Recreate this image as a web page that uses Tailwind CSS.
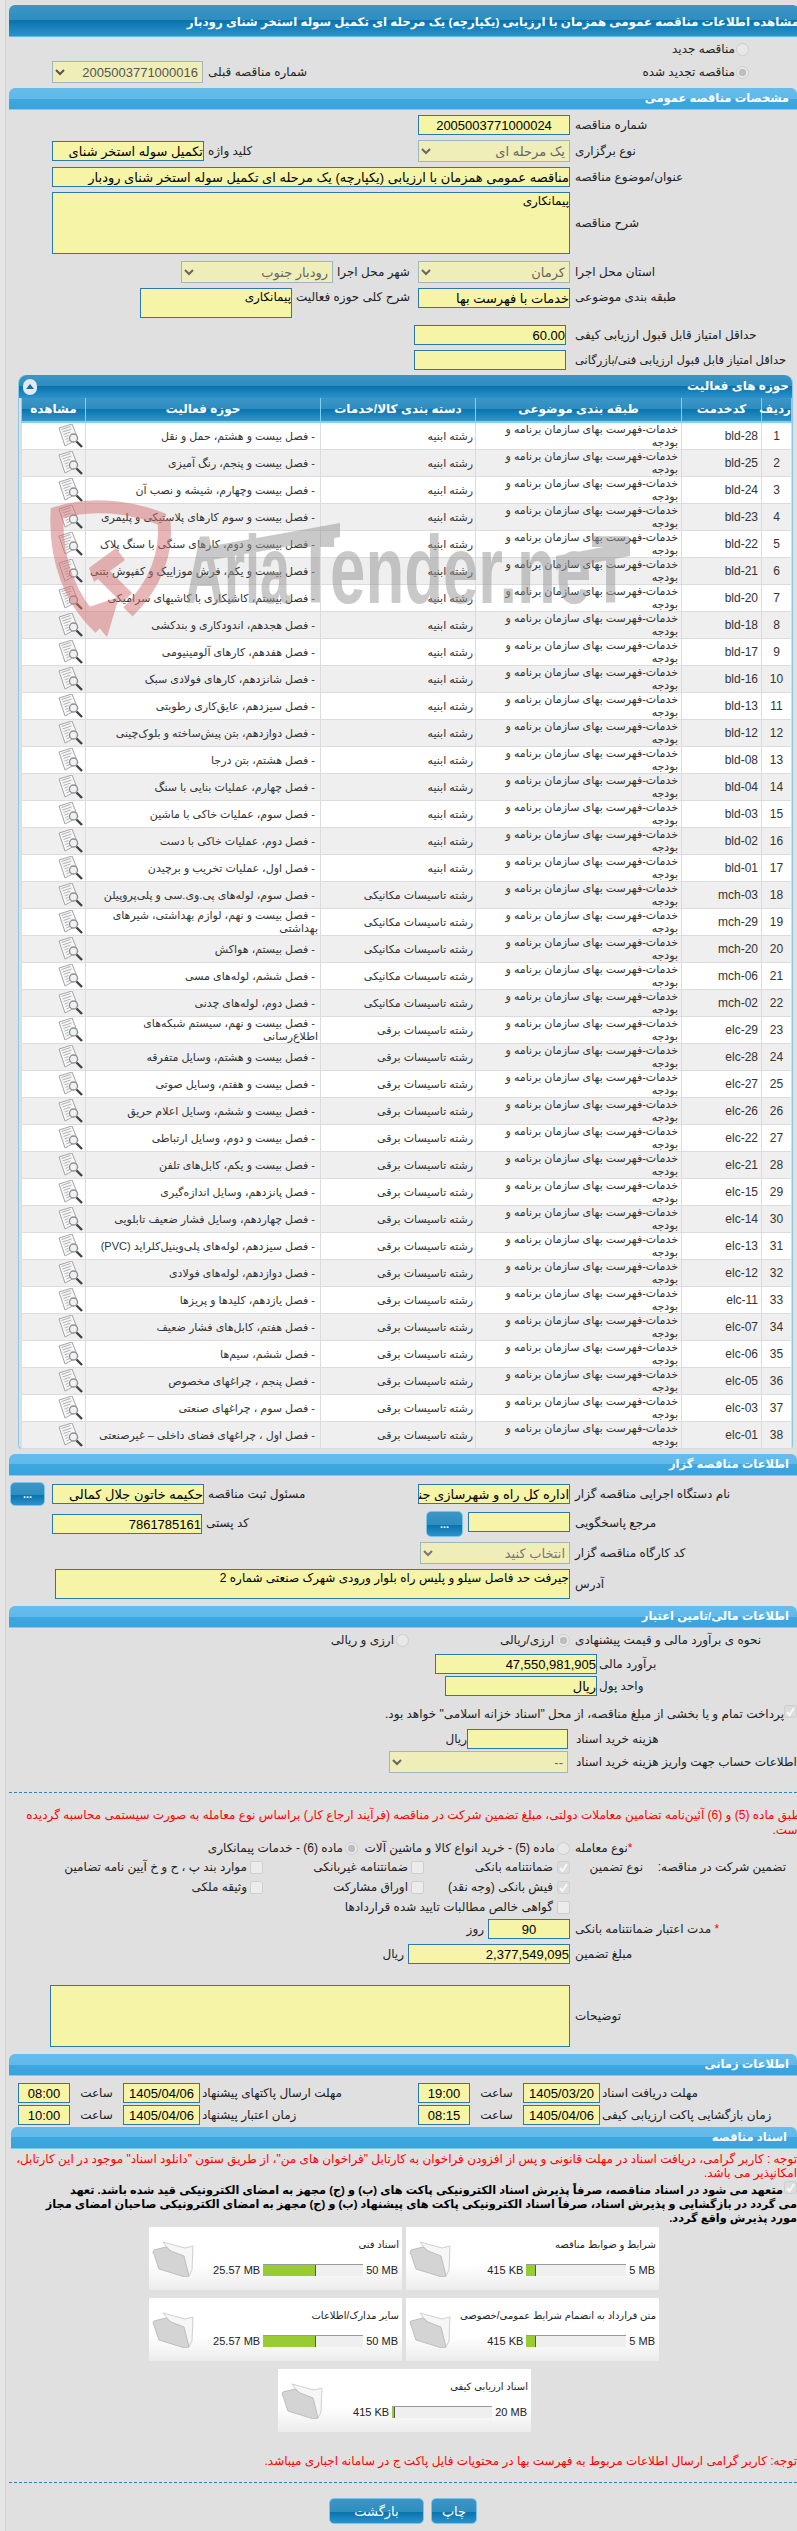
<!DOCTYPE html>
<html lang="fa" dir="rtl">
<head>
<meta charset="UTF-8">
<title>مشاهده اطلاعات مناقصه</title>
<script src="https://cdn.jsdelivr.net/npm/@tailwindcss/browser@4"></script>
</head>
<body class="relative w-[797px] h-[2531px] overflow-hidden bg-[#e0e0e0] text-[12px] leading-[15px] text-[#222] font-[Liberation_Sans,DejaVu_Sans,sans-serif]">

<!-- icons -->
<svg class="hidden">
	<symbol id="doc" viewBox="0 0 25 24">
		<path d="M1 4 14 0l6 15-13 7z" fill="#f7f7f7" stroke="#a4a4a4"/>
		<path d="M3.5 5.5l9-3M4.5 8l9-3M5.5 10.5l7-2.5M6.500 13l4-1.500M7.500 15.500l3-1.200M8.500 18l4-2" stroke="#b0b0b0" fill="none"/>
		<circle cx="15.500" cy="14" r="4" fill="#edf2f4" stroke="#8f8f8f" stroke-width="1.300"/>
		<path d="M18.500 17.500l5.500 5.500" stroke="#444" stroke-width="2.400"/>
	</symbol>
	<symbol id="folder" viewBox="0 0 42 38">
		<path d="M11 3l22 6 8-2-1 24-3 6z" fill="#f6f6f6" stroke="#d0d0d0"/>
		<path d="M2 11l12-3 5 4 13 5 5 20-4 1-26-8C5 25 3 17 1 13z" fill="#d4d4d4" stroke="#bdbdbd"/>
	</symbol>
	<symbol id="tick" viewBox="0 0 13 13">
		<rect x="0.5" y="0.5" width="12" height="12" rx="2" fill="#dcdcdc" stroke="#cfcfcf"/>
		<path d="M3 7l2.5 3L10 3" fill="none" stroke="#f8f8f8" stroke-width="2"/>
	</symbol>
</svg>

<!-- left strip -->
<div class="absolute left-0 top-0 w-[6px] h-full bg-[#e6e6e6] border-r border-[#cfcfcf]"></div>

<div class="mt-[5px] ml-[9px] h-[32px] rounded-t-[6px] border-b border-[#5cbcec] bg-[linear-gradient(to_bottom,#3a96c6_0%,#2e8dbf_50%,#0a73ac_50%,#2c92cc_100%)] pt-[7px] -mr-[2px] text-[11.8px] leading-[20px] font-bold text-white whitespace-nowrap">مشاهده اطلاعات مناقصه عمومی همزمان با ارزیابی (یکپارچه) یک مرحله ای تکمیل سوله استخر شنای رودبار</div>

<div class="mt-[5px] h-[14px] flex items-center gap-[1px] pr-[48px]">
	<input type="radio" disabled class="appearance-none w-[13px] h-[13px] rounded-full bg-[#e8e8e8] border border-[#cdcdcd]">
	<span>مناقصه جدید</span>
</div>
<div class="mt-[5px] h-[22px] flex items-center pr-[48px] pl-[52px]">
	<input type="radio" checked disabled class="appearance-none w-[13px] h-[13px] rounded-full border border-[#cdcdcd] bg-[radial-gradient(circle,#bdbdbd_0%,#bdbdbd_45%,#e8e8e8_50%)]">
	<span class="mr-[1px]">مناقصه تجدید شده</span>
	<span class="mr-auto ml-[5px]">شماره مناقصه قبلی</span>
	<select disabled class="w-[151px] h-[22px] border border-[#9fb6bd] bg-[#f0eeb8] text-[13px] text-[#555] opacity-100"><option>2005003771000016</option></select>
</div>

<div class="mt-[5px] ml-[9px] h-[22px] rounded-t-[6px] border-b border-[#7ccdf0] bg-[linear-gradient(to_bottom,#66bdec_0%,#60b9ea_50%,#3ea7e0_50%,#3ba3dc_100%)] pr-[8px] pt-[3px] text-[11.5px] font-bold text-white">مشخصات مناقصه عمومی</div>

<div class="mt-[5px] h-[20px] flex items-center">
	<label class="w-[222px] shrink-0 text-left">شماره مناقصه</label>
	<input readonly value="2005003771000024" class="mr-[5px] w-[152px] h-[20px] border border-[#2a79a8] bg-[#f6f4a6] text-center text-[13px] text-black outline-none">
</div>
<div class="mt-[5px] h-[22px] flex items-center pl-[52px]">
	<label class="w-[222px] shrink-0 text-left">نوع برگزاری</label>
	<select disabled class="mr-[5px] w-[152px] h-[22px] border border-[#9fb6bd] bg-[#f0eeb8] text-[13px] text-[#666] opacity-100"><option>یک مرحله ای</option></select>
	<label class="mr-auto ml-[4px]">کلید واژه</label>
	<input readonly value="تکمیل سوله استخر شنای" class="w-[152px] h-[20px] border border-[#2a79a8] bg-[#f6f4a6] text-[13px] text-black outline-none">
</div>
<div class="mt-[5px] h-[20px] flex items-center">
	<label class="w-[222px] shrink-0 text-left">عنوان/موضوع مناقصه</label>
	<input readonly value="مناقصه عمومی همزمان با ارزیابی (یکپارچه) یک مرحله ای تکمیل سوله استخر شنای رودبار" class="mr-[5px] w-[518px] h-[20px] border border-[#2a79a8] bg-[#f6f4a6] text-[13px] text-black outline-none">
</div>
<div class="mt-[5px] h-[62px] flex items-center">
	<label class="w-[222px] shrink-0 text-left">شرح مناقصه</label>
	<textarea readonly class="mr-[5px] w-[518px] h-[62px] resize-none border border-[#2a79a8] bg-[#f6f4a6] text-[12px] leading-[16px] text-black outline-none">پیمانکاری</textarea>
</div>
<div class="mt-[7px] h-[22px] flex items-center pl-[181px]">
	<label class="w-[222px] shrink-0 text-left">استان محل اجرا</label>
	<select disabled class="mr-[5px] w-[152px] h-[22px] border border-[#9fb6bd] bg-[#f0eeb8] text-[13px] text-[#666] opacity-100"><option>کرمان</option></select>
	<label class="mr-auto ml-[4px]">شهر محل اجرا</label>
	<select disabled class="w-[152px] h-[22px] border border-[#9fb6bd] bg-[#f0eeb8] text-[13px] text-[#666] opacity-100"><option>رودبار جنوب</option></select>
</div>
<div class="mt-[5px] h-[30px] flex items-start pl-[140px]">
	<label class="w-[222px] shrink-0 text-left pt-[2px]">طبقه بندی موضوعی</label>
	<input readonly value="خدمات با فهرست بها" class="mr-[5px] w-[152px] h-[20px] border border-[#2a79a8] bg-[#f6f4a6] text-[13px] text-black outline-none">
	<label class="mr-auto ml-[4px] pt-[2px]">شرح کلی حوزه فعالیت</label>
	<textarea readonly class="w-[152px] h-[30px] resize-none border border-[#2a79a8] bg-[#f6f4a6] text-[12px] leading-[16px] text-black outline-none">پیمانکاری</textarea>
</div>
<div class="mt-[7px] h-[20px] flex items-center">
	<label class="w-[222px] shrink-0 text-left">حداقل امتیاز قابل قبول ارزیابی کیفی</label>
	<input readonly value="60.00" class="mr-[9px] w-[152px] h-[20px] border border-[#2a79a8] bg-[#f6f4a6] text-[13px] text-black outline-none">
</div>
<div class="mt-[5px] h-[20px] flex items-center">
	<label class="w-[222px] shrink-0 text-left whitespace-nowrap text-[11.5px]">حداقل امتیاز قابل قبول ارزیابی فنی/بازرگانی</label>
	<input readonly class="mr-[9px] w-[152px] h-[20px] border border-[#2a79a8] bg-[#f6f4a6] outline-none">
</div>

<!-- activity table -->
<div class="relative mt-[5px] ml-[18px] mr-[4px] h-[1074px] rounded-t-[8px] border-b border-x border-[#8cc7e8] rounded-b-[4px]">
	<div class="flex h-[23px] items-center rounded-t-[8px] bg-[linear-gradient(to_bottom,#3a96c6_0%,#2e8dbf_50%,#0a73ac_50%,#2c92cc_100%)] pr-[3px] pl-[4px] text-[12px] font-bold text-white">
		<span>حوزه های فعالیت</span>
		<span class="mr-auto flex h-[16px] w-[14px] items-center justify-center rounded-full bg-[#dfeaf3]"><svg width="8" height="5" viewBox="0 0 8 5"><path d="M4 0l4 5H0z" fill="#1b6fa5"/></svg></span>
	</div>
	<table class="w-[771px] mr-0 ml-[3px] table-fixed border-collapse">
		<thead>
			<tr class="h-[24px] border-b-2 border-[#7cd4f2] bg-[linear-gradient(to_bottom,#3a96c6_0%,#2e8dbf_50%,#0a73ac_50%,#2c92cc_100%)] text-center text-[12px] font-bold text-white">
				<th class="w-[30px] border-x border-[#7cd4f2] p-0">ردیف</th>
				<th class="w-[80px] border-x border-[#7cd4f2] p-0">کدخدمت</th>
				<th class="w-[206px] border-x border-[#7cd4f2] p-0">طبقه بندی موضوعی</th>
				<th class="w-[155px] border-x border-[#7cd4f2] p-0">دسته بندی کالا/خدمات</th>
				<th class="w-[235px] border-x border-[#7cd4f2] p-0">حوزه فعالیت</th>
				<th class="border-x border-[#7cd4f2] p-0">مشاهده</th>
			</tr>
		</thead>
		<tbody id="rows" class="text-[11px] leading-[13px] text-[#333]"></tbody>
	</table>
</div>

<div class="mt-[5px] ml-[9px] h-[22px] rounded-t-[6px] border-b border-[#7ccdf0] bg-[linear-gradient(to_bottom,#66bdec_0%,#60b9ea_50%,#3ea7e0_50%,#3ba3dc_100%)] pr-[8px] pt-[3px] text-[11.5px] font-bold text-white">اطلاعات مناقصه گزار</div>

<div class="mt-[8px] h-[20px] flex items-center pl-[10px]">
	<label class="w-[222px] shrink-0 text-left">نام دستگاه اجرایی مناقصه گزار</label>
	<input readonly value="اداره کل راه و شهرسازی جنوب کرمان" class="mr-[5px] w-[152px] h-[20px] border border-[#2a79a8] bg-[#f6f4a6] text-[13px] text-black outline-none">
	<label class="mr-auto ml-[4px]">مسئول ثبت مناقصه</label>
	<input readonly value="حکیمه خاتون جلال کمالی" class="ml-[7px] w-[152px] h-[20px] border border-[#2a79a8] bg-[#f6f4a6] text-[13px] text-black outline-none">
	<button class="h-[24px] w-[35px] shrink-0 rounded-[5px] border border-[#7cc4ea] bg-[linear-gradient(to_bottom,#3a96c6_0%,#2e8dbf_55%,#0a73ac_55%,#2c92cc_100%)] text-[11px] font-bold leading-[12px] text-white">...</button>
</div>
<div class="mt-[8px] h-[26px] flex items-start pl-[52px]">
	<label class="w-[222px] shrink-0 text-left pt-[4px]">مرجع پاسخگویی</label>
	<input readonly class="mr-[5px] w-[102px] h-[20px] border border-[#2a79a8] bg-[#f6f4a6] outline-none">
	<button class="mr-[5px] -mt-[1px] h-[26px] w-[37px] shrink-0 rounded-[5px] border border-[#7cc4ea] bg-[linear-gradient(to_bottom,#3a96c6_0%,#2e8dbf_55%,#0a73ac_55%,#2c92cc_100%)] text-[11px] font-bold leading-[12px] text-white">...</button>
	<label class="mr-auto ml-[4px] pt-[4px]">کد پستی</label>
	<input readonly value="7861785161" class="mt-[2px] w-[150px] h-[20px] border border-[#2a79a8] bg-[#f6f4a6] text-[13px] text-black outline-none">
</div>
<div class="mt-[4px] h-[22px] flex items-center">
	<label class="w-[222px] shrink-0 text-left">کد کارگاه مناقصه گزار</label>
	<select disabled class="mr-[5px] w-[150px] h-[22px] border border-[#9fb6bd] bg-[#f0eeb8] text-[13px] text-[#777] opacity-100"><option>انتخاب کنید</option></select>
</div>
<div class="mt-[5px] h-[30px] flex items-center">
	<label class="w-[222px] shrink-0 text-left">آدرس</label>
	<textarea readonly class="mr-[5px] w-[515px] h-[30px] resize-none border border-[#2a79a8] bg-[#f6f4a6] text-[12px] leading-[16px] text-black outline-none">جیرفت حد فاصل سیلو و پلیس راه بلوار ورودی شهرک صنعتی شماره 2</textarea>
</div>

<div class="mt-[7px] ml-[9px] h-[22px] rounded-t-[6px] border-b border-[#7ccdf0] bg-[linear-gradient(to_bottom,#66bdec_0%,#60b9ea_50%,#3ea7e0_50%,#3ba3dc_100%)] pr-[8px] pt-[3px] text-[11.5px] font-bold text-white">اطلاعات مالی/تامین اعتبار</div>

<div class="mt-[5px] h-[14px] flex items-center">
	<label class="w-[222px] shrink-0 text-left">نحوه ی برآورد مالی و قیمت پیشنهادی</label>
	<div class="mr-[5px] flex w-[161px] items-center gap-[3px]">
		<input type="radio" checked disabled class="appearance-none w-[13px] h-[13px] rounded-full border border-[#cdcdcd] bg-[radial-gradient(circle,#bdbdbd_0%,#bdbdbd_45%,#e8e8e8_50%)]">
		<span>ارزی/ریالی</span>
	</div>
	<div class="flex items-center gap-[2px]">
		<input type="radio" disabled class="appearance-none w-[13px] h-[13px] rounded-full bg-[#e8e8e8] border border-[#cdcdcd]">
		<span>ارزی و ریالی</span>
	</div>
</div>
<div class="mt-[7px] h-[20px] flex items-center">
	<label class="w-[198px] shrink-0 text-left">برآورد مالی</label>
	<input readonly value="47,550,981,905" class="mr-[2px] w-[162px] h-[20px] border border-[#2a79a8] bg-[#f6f4a6] text-[13px] text-black outline-none">
</div>
<div class="mt-[2px] h-[20px] flex items-center">
	<label class="w-[198px] shrink-0 text-left">واحد پول</label>
	<input readonly value="ریال" class="mr-[2px] w-[152px] h-[20px] border border-[#2a79a8] bg-[#f6f4a6] text-[13px] text-black outline-none">
</div>
<div class="mt-[9px] h-[13px] flex items-start">
	<svg class="shrink-0" width="13" height="13"><use href="#tick"/></svg>
	<span class="mt-[2px] whitespace-nowrap">پرداخت تمام و یا بخشی از مبلغ مناقصه، از محل "اسناد خزانه اسلامی" خواهد بود.</span>
</div>
<div class="mt-[11px] h-[20px] flex items-center">
	<label class="w-[221px] shrink-0 text-left">هزینه خرید اسناد</label>
	<input readonly class="mr-[8px] w-[101px] h-[20px] border border-[#2a79a8] bg-[#f6f4a6] outline-none">
	<span>ریال</span>
</div>
<div class="mt-[2px] h-[22px] flex items-center">
	<label class="w-[221px] shrink-0 text-left whitespace-nowrap">اطلاعات حساب جهت واریز هزینه خرید اسناد</label>
	<select disabled class="mr-[8px] w-[179px] h-[22px] border border-[#9fb6bd] bg-[#f0eeb8] text-[13px] text-[#666] opacity-100"><option>--</option></select>
</div>

<div class="mt-[19px] ml-[9px] border-t border-dashed border-[#2a86b5]"></div>

<p class="mt-[15px] -mr-[4px] h-[30px] whitespace-nowrap text-[12px] leading-[15px] text-[#f00]">طبق ماده (5) و (6) آئین‌نامه تضامین معاملات دولتی، مبلغ تضمین شرکت در مناقصه (فرآیند ارجاع کار) براساس نوع معامله به صورت سیستمی محاسبه گردیده<br>است.</p>

<div class="mt-[3px] h-[14px] flex items-center">
	<label class="w-[222px] shrink-0 text-left"><span class="text-[#f00]">*</span>نوع معامله</label>
	<div class="mr-[5px] flex w-[212px] items-center gap-[2px]">
		<input type="radio" disabled class="appearance-none w-[13px] h-[13px] rounded-full bg-[#e8e8e8] border border-[#cdcdcd]">
		<span class="whitespace-nowrap">ماده (5) - خرید انواع کالا و ماشین آلات</span>
	</div>
	<div class="flex items-center gap-[2px]">
		<input type="radio" checked disabled class="appearance-none w-[13px] h-[13px] rounded-full border border-[#cdcdcd] bg-[radial-gradient(circle,#bdbdbd_0%,#bdbdbd_45%,#e8e8e8_50%)]">
		<span class="whitespace-nowrap">ماده (6) - خدمات پیمانکاری</span>
	</div>
</div>
<div class="mt-[6px] h-[13px] flex items-center pr-[11px]">
	<span class="w-[143px] shrink-0 whitespace-nowrap">تضمین شرکت در مناقصه:</span>
	<span class="w-[73px] shrink-0 whitespace-nowrap">نوع تضمین</span>
	<div class="flex w-[146px] shrink-0 items-center gap-[4px]"><svg class="shrink-0" width="13" height="13"><use href="#tick"/></svg><span class="whitespace-nowrap">ضمانتنامه بانکی</span></div>
	<div class="flex w-[161px] shrink-0 items-center gap-[3px]"><span class="h-[13px] w-[13px] shrink-0 rounded-[2px] border border-[#cfcfcf] bg-[#ececec]"></span><span class="whitespace-nowrap">ضمانتنامه غیربانکی</span></div>
	<div class="flex items-center gap-[3px]"><span class="h-[13px] w-[13px] shrink-0 rounded-[2px] border border-[#cfcfcf] bg-[#ececec]"></span><span class="whitespace-nowrap">موارد بند پ ، ح و خ آیین نامه تضامین</span></div>
</div>
<div class="mt-[7px] h-[13px] flex items-center pr-[227px]">
	<div class="flex w-[146px] shrink-0 items-center gap-[4px]"><svg class="shrink-0" width="13" height="13"><use href="#tick"/></svg><span class="whitespace-nowrap">فیش بانکی (وجه نقد)</span></div>
	<div class="flex w-[161px] shrink-0 items-center gap-[3px]"><span class="h-[13px] w-[13px] shrink-0 rounded-[2px] border border-[#cfcfcf] bg-[#ececec]"></span><span class="whitespace-nowrap">اوراق مشارکت</span></div>
	<div class="flex items-center gap-[3px]"><span class="h-[13px] w-[13px] shrink-0 rounded-[2px] border border-[#cfcfcf] bg-[#ececec]"></span><span class="whitespace-nowrap">وثیقه ملکی</span></div>
</div>
<div class="mt-[7px] h-[13px] flex items-center pr-[227px] gap-[4px]">
	<span class="h-[13px] w-[13px] shrink-0 rounded-[2px] border border-[#cfcfcf] bg-[#ececec]"></span><span class="whitespace-nowrap">گواهی خالص مطالبات تایید شده قراردادها</span>
</div>
<div class="mt-[5px] h-[20px] flex items-center">
	<label class="w-[222px] shrink-0 text-left"><span class="text-[#f00]">* </span>مدت اعتبار ضمانتنامه بانکی</label>
	<input readonly value="90" class="mr-[5px] w-[82px] h-[20px] border border-[#2a79a8] bg-[#f6f4a6] text-center text-[13px] text-black outline-none">
	<span class="mr-[4px]">روز</span>
</div>
<div class="mt-[5px] h-[20px] flex items-center">
	<label class="w-[222px] shrink-0 text-left">مبلغ تضمین</label>
	<input readonly value="2,377,549,095" class="mr-[5px] w-[162px] h-[20px] border border-[#2a79a8] bg-[#f6f4a6] text-[13px] text-black outline-none">
	<span class="mr-[4px]">ریال</span>
</div>
<div class="mt-[21px] h-[62px] flex items-center">
	<label class="w-[222px] shrink-0 text-left">توضیحات</label>
	<textarea readonly class="mr-[5px] w-[520px] h-[62px] resize-none border border-[#2a79a8] bg-[#f6f4a6] outline-none"></textarea>
</div>

<div class="mt-[7px] ml-[9px] h-[22px] rounded-t-[6px] border-b border-[#7ccdf0] bg-[linear-gradient(to_bottom,#66bdec_0%,#60b9ea_50%,#3ea7e0_50%,#3ba3dc_100%)] pr-[8px] pt-[3px] text-[11.5px] font-bold text-white">اطلاعات زمانی</div>

<div class="mt-[7px] h-[20px] flex items-center">
	<label class="w-[195px] shrink-0 text-left">مهلت دریافت اسناد</label>
	<input readonly value="1405/03/20" class="mr-[2px] w-[77px] h-[20px] border border-[#2a79a8] bg-[#f6f4a6] text-center text-[13px] text-black outline-none">
	<span class="w-[53px] shrink-0 text-center">ساعت</span>
	<input readonly value="19:00" class="w-[52px] h-[20px] border border-[#2a79a8] bg-[#f6f4a6] text-center text-[13px] text-black outline-none">
	<label class="w-[216px] shrink-0 text-left">مهلت ارسال پاکتهای پیشنهاد</label>
	<input readonly value="1405/04/06" class="mr-[2px] w-[77px] h-[20px] border border-[#2a79a8] bg-[#f6f4a6] text-center text-[13px] text-black outline-none">
	<span class="w-[53px] shrink-0 text-center">ساعت</span>
	<input readonly value="08:00" class="w-[52px] h-[20px] border border-[#2a79a8] bg-[#f6f4a6] text-center text-[13px] text-black outline-none">
</div>
<div class="mt-[2px] h-[20px] flex items-center">
	<label class="w-[195px] shrink-0 text-left whitespace-nowrap">زمان بازگشایی پاکت ارزیابی کیفی</label>
	<input readonly value="1405/04/06" class="mr-[2px] w-[77px] h-[20px] border border-[#2a79a8] bg-[#f6f4a6] text-center text-[13px] text-black outline-none">
	<span class="w-[53px] shrink-0 text-center">ساعت</span>
	<input readonly value="08:15" class="w-[52px] h-[20px] border border-[#2a79a8] bg-[#f6f4a6] text-center text-[13px] text-black outline-none">
	<label class="w-[216px] shrink-0 text-left">زمان اعتبار پیشنهاد</label>
	<input readonly value="1405/04/06" class="mr-[2px] w-[77px] h-[20px] border border-[#2a79a8] bg-[#f6f4a6] text-center text-[13px] text-black outline-none">
	<span class="w-[53px] shrink-0 text-center">ساعت</span>
	<input readonly value="10:00" class="w-[52px] h-[20px] border border-[#2a79a8] bg-[#f6f4a6] text-center text-[13px] text-black outline-none">
</div>

<div class="mt-[2px] ml-[11px] h-[22px] rounded-t-[6px] border-b border-[#7ccdf0] bg-[linear-gradient(to_bottom,#66bdec_0%,#60b9ea_50%,#3ea7e0_50%,#3ba3dc_100%)] pr-[10px] pt-[3px] text-[11.5px] font-bold text-white">اسناد مناقصه</div>

<p class="mt-[3px] h-[28px] whitespace-nowrap text-[12px] leading-[14px] text-[#f00]">توجه : کاربر گرامی، دریافت اسناد در مهلت قانونی و پس از افزودن فراخوان به کارتابل "فراخوان های من"، از طریق ستون "دانلود اسناد" موجود در این کارتابل،<br>امکانپذیر می باشد.</p>

<div class="relative mt-[1px] h-[42px] whitespace-nowrap text-[11.3px] leading-[14px] font-bold text-black">
	<svg class="absolute right-0 top-0" width="13" height="13"><use href="#tick"/></svg>
	<p class="pr-[14px] pt-[2px]">متعهد می شود در اسناد مناقصه، صرفاً پذیرش اسناد الکترونیکی پاکت های (ب) و (ج) مجهز به امضای الکترونیکی قید شده باشد. تعهد</p>
	<p>می گردد در بازگشایی و پذیرش اسناد، صرفاً اسناد الکترونیکی پاکت های پیشنهاد (ب) و (ج) مجهز به امضای الکترونیکی صاحبان امضای مجاز</p>
	<p>مورد پذیرش واقع گردد.</p>
</div>

<!-- upload cards -->
<div id="cards" class="mt-[4px] flex flex-wrap w-[521px] mr-[138px] gap-x-[4px] gap-y-[8px]"></div>

<p class="mt-[22px] h-[15px] whitespace-nowrap text-[12px] text-[#f00]">توجه: کاربر گرامی ارسال اطلاعات مربوط به فهرست بها در محتویات فایل پاکت ج در سامانه اجباری میباشد.</p>
<div class="mt-[13px] ml-[9px] border-t border-dashed border-[#2a86b5]"></div>
<div class="mt-[15px] flex gap-[7px] pr-[320px]">
	<button class="h-[26px] w-[46px] rounded-[5px] border border-[#7cc4ea] bg-[linear-gradient(to_bottom,#3a96c6_0%,#2e8dbf_55%,#0a73ac_55%,#2c92cc_100%)] text-[13px] text-white">چاپ</button>
	<button class="h-[26px] w-[95px] rounded-[5px] border border-[#7cc4ea] bg-[linear-gradient(to_bottom,#3a96c6_0%,#2e8dbf_55%,#0a73ac_55%,#2c92cc_100%)] text-[13px] text-white">بازگشت</button>
</div>

<!-- watermark -->
<svg class="pointer-events-none absolute left-[40px] top-[490px] opacity-50" width="610" height="155" viewBox="40 490 610 155" dir="ltr">
	<g fill="none" stroke="#d26f6f" stroke-width="13">
		<path d="M164 520C130 506 90 502 57 513C55 560 70 600 100 628"/>
		<path d="M164 520C168 560 150 590 128 612"/>
	</g>
	<path d="M89 568l27-20 9 12-15 11 22 22-10 10-24-24-4 3z" fill="#d26f6f"/>
	<path d="M107 637l-24-28 36-12z" fill="#d26f6f"/>
	<path d="M201 548L340 523V537L201 562zM556 556L630 542V556L556 570z" fill="#959595"/>
	<g font-family="Liberation Sans" font-weight="700" font-size="96" fill="#959595" style="direction:ltr;unicode-bidi:isolate">
		<text x="185" y="603" textLength="105" lengthAdjust="spacingAndGlyphs">Aria</text>
		<text x="296" y="603" textLength="334" lengthAdjust="spacingAndGlyphs">Tender.neT</text>
	</g>
</svg>

<script>
	const activities = [
		['bld-28', '- فصل بیست و هشتم، حمل و نقل'], ['bld-25', '- فصل بیست و پنجم، رنگ آمیزی'],
		['bld-24', '- فصل بیست وچهارم، شیشه و نصب آن'], ['bld-23', '- فصل بیست و سوم کارهای پلاستیکی و پلیمری'],
		['bld-22', '- فصل بیست و دوم، کارهای سنگی با سنگ پلاک'], ['bld-21', '- فصل بیست و یکم، فرش موزاییک و کفپوش بتنی'],
		['bld-20', '- فصل بیستم، کاشیکاری با کاشیهای سرامیکی'], ['bld-18', '- فصل هجدهم، اندودکاری و بندکشی'],
		['bld-17', '- فصل هفدهم، کارهای آلومینیومی'], ['bld-16', '- فصل شانزدهم، کارهای فولادی سبک'],
		['bld-13', '- فصل سیزدهم، عایق‌کاری رطوبتی'], ['bld-12', '- فصل دوازدهم، بتن پیش‌ساخته و بلوک‌چینی'],
		['bld-08', '- فصل هشتم، بتن درجا'], ['bld-04', '- فصل چهارم، عملیات بنایی با سنگ'],
		['bld-03', '- فصل سوم، عملیات خاکی با ماشین'], ['bld-02', '- فصل دوم، عملیات خاکی با دست'],
		['bld-01', '- فصل اول، عملیات تخریب و برچیدن'], ['mch-03', '- فصل سوم، لوله‌های پی.وی.سی و پلی‌پروپیلن'],
		['mch-29', '- فصل بیست و نهم، لوازم بهداشتی، شیرهای<br>بهداشتی'], ['mch-20', '- فصل بیستم، هواکش'],
		['mch-06', '- فصل ششم، لوله‌های مسی'], ['mch-02', '- فصل دوم، لوله‌های چدنی'],
		['elc-29', '- فصل بیست و نهم، سیستم شبکه‌های<br>اطلاع‌رسانی'], ['elc-28', '- فصل بیست و هشتم، وسایل متفرقه'],
		['elc-27', '- فصل بیست و هفتم، وسایل صوتی'], ['elc-26', '- فصل بیست و ششم، وسایل اعلام حریق'],
		['elc-22', '- فصل بیست و دوم، وسایل ارتباطی'], ['elc-21', '- فصل بیست و یکم، کابل‌های تلفن'],
		['elc-15', '- فصل پانزدهم، وسایل اندازه‌گیری'], ['elc-14', '- فصل چهاردهم، وسایل فشار ضعیف تابلویی'],
		['elc-13', '- فصل سیزدهم، لوله‌های پلی‌وینیل‌کلراید (PVC)'], ['elc-12', '- فصل دوازدهم، لوله‌های فولادی'],
		['elc-11', '- فصل یازدهم، کلیدها و پریزها'], ['elc-07', '- فصل هفتم، کابل‌های فشار ضعیف'],
		['elc-06', '- فصل ششم، سیم‌ها'], ['elc-05', '- فصل پنجم ، چراغهای مخصوص'],
		['elc-03', '- فصل سوم ، چراغهای صنعتی'], ['elc-01', '- فصل اول ، چراغهای فضای داخلی – غیرصنعتی']
	];

	function groupOf(code) {
		if (code.startsWith('bld')) return 'رشته ابنیه';
		if (code.startsWith('mch')) return 'رشته تاسیسات مکانیکی';
		return 'رشته تاسیسات برقی';
	}

	document.getElementById('rows').innerHTML = activities.map((a, i) => `
		<tr class="h-[27px] border-b border-[#dcdcdc] ${i % 2 ? 'bg-[#efefef]' : 'bg-white'}">
			<td class="border-x border-[#dcdcdc] p-0 text-center text-[12px]">${i + 1}</td>
			<td class="border-x border-[#dcdcdc] p-0 pr-[3px] text-right text-[12px]" dir="ltr">${a[0]}</td>
			<td class="border-x border-[#dcdcdc] p-0 pr-[3px] whitespace-nowrap">خدمات-فهرست بهای سازمان برنامه و<br>بودجه</td>
			<td class="border-x border-[#dcdcdc] p-0 pr-[2px]">${groupOf(a[0])}</td>
			<td class="border-x border-[#dcdcdc] p-0 pr-[2px] whitespace-nowrap">&nbsp;${a[1]}</td>
			<td class="border-x border-[#dcdcdc] p-0 pr-[2px] align-middle"><svg class="block" width="25" height="24"><use href="#doc"/></svg></td>
		</tr>`).join('');

	const files = [
		['شرایط و ضوابط مناقصه', '415 KB', '5 MB', 'w-[10px]'],
		['اسناد فنی', '25.57 MB', '50 MB', 'w-[53px]'],
		['متن قرارداد به انضمام شرایط عمومی/خصوصی', '415 KB', '5 MB', 'w-[10px]'],
		['سایر مدارک/اطلاعات', '25.57 MB', '50 MB', 'w-[53px]'],
		['اسناد ارزیابی کیفی', '415 KB', '20 MB', 'w-[3px]']
	];

	document.getElementById('cards').innerHTML = files.map((f, i) => `
		<div class="relative h-[63px] w-[253px] bg-[linear-gradient(to_bottom,#ffffff_0%,#ffffff_60%,#ececec_100%)] ${i === 4 ? 'mr-[128px]' : ''}">
			<p class="pr-[3px] pt-[10px] text-[10px] leading-[15px] text-[#222] whitespace-nowrap">${f[0]}</p>
			<div class="absolute right-[4px] top-[37px] flex items-center gap-[3px] text-[11px] leading-[12px] text-[#222]" dir="ltr">
				<span class="whitespace-nowrap">${f[1]}</span>
				<span class="flex h-[12px] w-[100px] border-t border-[#999] bg-[#efefef]"><span class="h-full ${f[3]} border-r border-[#555] bg-[#99cc33]"></span></span>
				<span class="whitespace-nowrap">${f[2]}</span>
			</div>
			<svg class="absolute left-[3px] top-[12px]" width="42" height="38"><use href="#folder"/></svg>
		</div>`).join('');
</script>
</body>
</html>
